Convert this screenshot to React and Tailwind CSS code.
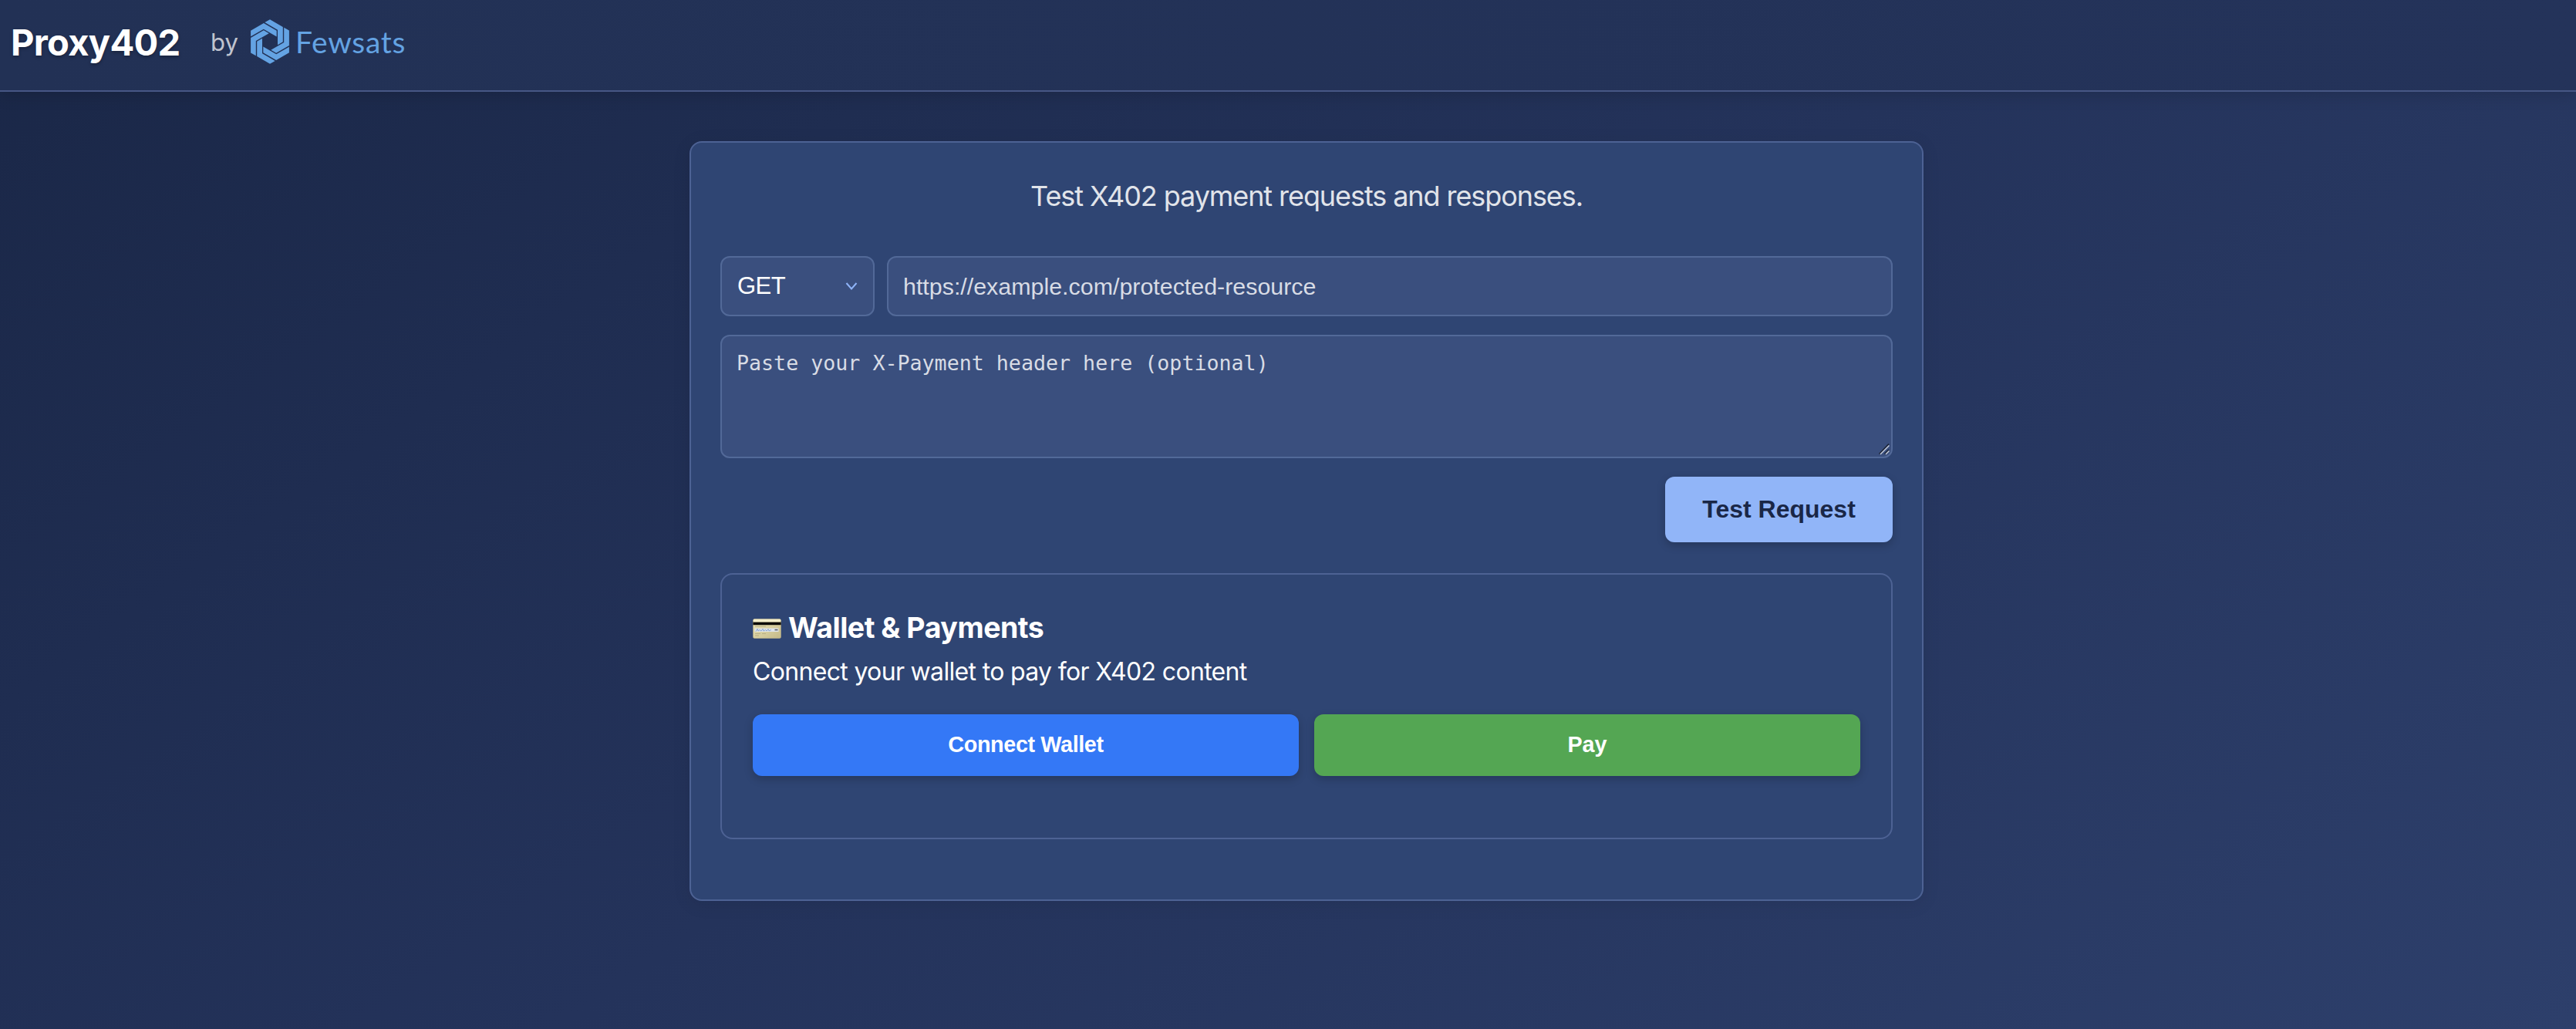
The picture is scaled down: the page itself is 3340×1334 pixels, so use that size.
const blade = "18.2,-18.24 24.9,-14.38 24.9,5.02 8.1,14.72 1.3,10.8 18.2,1.04";
const turns = [0, 60, 120, 180, 240, 300];

function Logo() {
  return (
    <svg className="h-16 w-14" viewBox="-28 -32 56 64" fill="currentColor">
      {turns.map((deg) => (
        <polygon key={deg} points={blade} transform={`rotate(${deg})`} />
      ))}
    </svg>
  );
}

function CardIcon() {
  return (
    <svg className="h-[26px] w-[37px] shrink-0" viewBox="0 0 37 26">
      <defs>
        <linearGradient id="cardFace" x1="0" y1="0" x2="1" y2="1">
          <stop offset="0" stopColor="#e9e3b8" />
          <stop offset="0.5" stopColor="#d9d0a0" />
          <stop offset="1" stopColor="#c4b988" />
        </linearGradient>
      </defs>
      <rect x="0.5" y="0.5" width="36" height="25" rx="1.8" fill="url(#cardFace)" stroke="#b3ab86" strokeWidth="0.6" />
      <rect x="0.8" y="0.8" width="35.4" height="3.4" rx="1.4" fill="#f3eecb" />
      <rect x="0.4" y="4.6" width="36.2" height="3.6" fill="#0c0b08" />
      <rect x="2.5" y="12.5" width="31" height="4.500" fill="#dfe4ea" />
      <path d="M4 16.500 6 13.200 7 16 9 14.500 11 16 13 13.300 14 16 16.500 14.500 18 16 20 13.500 21 15.800 24 14.500" fill="none" stroke="#7f9fd0" strokeWidth="0.9" />
      <rect x="28.500" y="13.800" width="4" height="1.500" fill="#55585c" />
      <path d="M3 10h14M3 19.500h7M12 19.500h5M3 22h5" stroke="#aaa27a" strokeWidth="0.7" />
    </svg>
  );
}

export default function App() {
  return (
    <div className="flex h-[1334px] w-[3340px] flex-col overflow-hidden bg-[linear-gradient(145deg,#1a2747_0%,#24335b_50%,#2d3f6b_100%)] font-['Inter',sans-serif] text-white">
      <header className="flex h-[119px] shrink-0 items-center border-b-2 border-[#475785] bg-[linear-gradient(90deg,#223155,#24335a)] pb-[9px] pl-[14px] shadow-[0_4px_20px_rgba(0,0,0,0.15)]">
        <h1 className="w-[220px] text-[47px] leading-none font-bold tracking-[-0.7px] whitespace-nowrap [text-shadow:0_2px_4px_rgba(0,0,0,0.3)]">
          Proxy402
        </h1>
        <span className="ml-[39px] w-[36px] text-[31px] leading-none text-[#c0c4cf]">by</span>
        <div className="ml-[13px] flex items-center text-[#64a3e3]">
          <Logo />
          <span className="ml-[5px] font-['Lato',sans-serif] text-[39px] leading-none tracking-[0.7px]">Fewsats</span>
        </div>
      </header>

      <main className="mt-16 ml-[894px] flex h-[985px] w-[1600px] shrink-0 flex-col rounded-2xl border-2 border-[#4d6294] bg-[#2f4573] px-[38px] shadow-[0_4px_24px_rgba(0,0,0,0.08)]">
        <p className="mt-[45px] h-12 text-center text-[36px] leading-[48px] tracking-[-1.08px] text-[#e1e4ea]">
          Test X402 payment requests and responses.
        </p>

        <div className="mt-[54px] flex gap-4">
          <div className="flex h-[78px] w-[200px] items-center justify-between rounded-xl border-2 border-[#526998] bg-[#3a4f7e] px-5 font-['Liberation_Sans',sans-serif] text-[31px]">
            <span className="pt-px tracking-[-0.5px]">GET</span>
            <svg className="h-3 w-4" viewBox="0 0 16 12" fill="none" stroke="#8fb4f8" strokeWidth="2">
              <path d="M1.500 2 8 9.500 14.500 2" />
            </svg>
          </div>
          <div className="flex h-[78px] flex-1 items-center rounded-xl border-2 border-[#526998] bg-[#3a4f7e] px-[19px] pt-px font-['Liberation_Sans',sans-serif] text-[30.4px] text-[#d8dce5]">
            https://example.com/protected-resource
          </div>
        </div>

        <div className="relative mt-6 h-40 shrink-0 rounded-xl border-2 border-[#526998] bg-[#3a4f7e] px-[19px] pt-[19px] font-['DejaVu_Sans_Mono',monospace] text-[26.65px] leading-8 text-[#d8dce5]">
          Paste your X-Payment header here (optional)
          <svg className="absolute right-[2px] bottom-[2px] h-[15px] w-[14px]" viewBox="0 0 14 15" fill="none">
            <path d="M0.500 13.500 13 0.500M7.500 13.500 13 8" stroke="#1b2233" strokeWidth="1.500" />
            <path d="M2 14 13.500 2.500M9 14 13.500 9.500" stroke="#c3cad8" strokeWidth="1.500" />
          </svg>
        </div>

        <button className="mt-6 h-[85px] w-[295px] shrink-0 self-end rounded-xl bg-[#91b5f8] pb-0.5 font-['Liberation_Sans',sans-serif] text-[32px] font-bold text-[#1a2747] shadow-[0_4px_12px_rgba(0,0,0,0.2)]">
          Test Request
        </button>

        <section className="mt-10 h-[345px] shrink-0 rounded-2xl border-2 border-[#4d6294] p-10">
          <h2 className="flex h-[58px] items-center gap-[9px] pt-px text-[37.5px] font-bold tracking-[-0.5px] whitespace-nowrap">
            <CardIcon />
            Wallet &amp; Payments
          </h2>
          <p className="mt-1 h-12 text-[32px] leading-[48px] tracking-[-0.67px]">Connect your wallet to pay for X402 content</p>
          <div className="mt-[31px] grid grid-cols-2 gap-5">
            <button className="h-20 rounded-xl bg-[#3478f6] font-['Liberation_Sans',sans-serif] text-[28.8px] font-bold tracking-[-0.4px] shadow-[0_4px_12px_rgba(0,0,0,0.2)]">
              Connect Wallet
            </button>
            <button className="h-20 rounded-xl bg-[#54a653] font-['Liberation_Sans',sans-serif] text-[28.8px] font-bold shadow-[0_4px_12px_rgba(0,0,0,0.2)]">
              Pay
            </button>
          </div>
        </section>
      </main>
    </div>
  );
}
